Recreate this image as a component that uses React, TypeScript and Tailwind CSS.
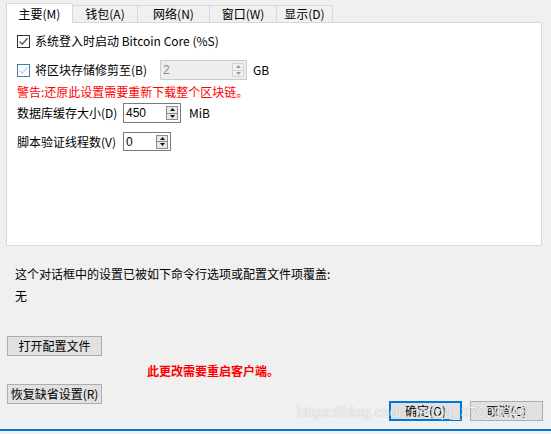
import React from 'react';

const font = { fontFamily: '"Noto Sans CJK SC", "Liberation Sans", sans-serif' };

function Check({ checked, hover }: { checked?: boolean; hover?: boolean }) {
  return (
    <span
      className={`flex h-[13px] w-[13px] shrink-0 items-center justify-center border bg-white ${
        hover ? 'border-[#3c7fb1]' : 'border-[#333333]'
      }`}
    >
      {checked || hover ? (
        <svg width="11" height="11" viewBox="0 0 11 11" aria-hidden>
          <path
            d="M1.5 5.5 L4.2 8.2 L9.5 2.2"
            fill="none"
            stroke={hover ? '#c8d4de' : '#555555'}
            strokeWidth="1.3"
          />
        </svg>
      ) : null}
    </span>
  );
}

function Spin({
  value,
  width,
  height,
  disabled,
}: {
  value: string;
  width: string;
  height: string;
  disabled?: boolean;
}) {
  const arrow = disabled ? '#9a9a9a' : '#111111';
  return (
    <div
      className={`flex items-center border pl-[2px] pr-[2px] ${width} ${height} ${
        disabled ? 'border-[#cccccc] bg-[#eeeeee] text-[#8a8a8a]' : 'border-[#7a7a7a] bg-white text-black'
      }`}
    >
      <span className="flex-1 text-[12px] leading-none" style={{ fontFamily: '"Liberation Sans", sans-serif' }}>
        {value}
      </span>
      <div
        className={`flex h-[14px] w-[12px] flex-col border ${
          disabled ? 'border-[#d4d4d4] bg-[#f2f2f2]' : 'border-[#8c8c8c] bg-[#e8e8e8]'
        }`}
      >
        <div className={`flex flex-1 items-center justify-center border-b ${disabled ? 'border-[#d4d4d4]' : 'border-[#8c8c8c]'}`}>
          <svg width="5" height="3" viewBox="0 0 5 3" aria-hidden>
            <path d="M0 3 L2.5 0 L5 3 Z" fill={arrow} />
          </svg>
        </div>
        <div className="flex flex-1 items-center justify-center">
          <svg width="5" height="3" viewBox="0 0 5 3" aria-hidden>
            <path d="M0 0 L2.5 3 L5 0 Z" fill={arrow} />
          </svg>
        </div>
      </div>
    </div>
  );
}

function Btn({ label, width, primary }: { label: string; width: string; primary?: boolean }) {
  return (
    <button
      className={`flex h-[20px] items-center justify-center bg-[#e1e1e1] text-[12px] leading-none text-black ${width} ${
        primary ? 'border-2 border-[#0078d7]' : 'border border-[#adadad]'
      }`}
    >
      {label}
    </button>
  );
}

export default function App() {
  const tabs = [
    { label: '钱包(A)', w: 'w-[65px]' },
    { label: '网络(N)', w: 'w-[72px]' },
    { label: '窗口(W)', w: 'w-[67px]' },
    { label: '显示(D)', w: 'w-[56px]' },
  ];

  return (
    <div className="relative flex h-[434px] w-[551px] flex-col overflow-hidden bg-[#f0f0f0] text-[12px] text-black" style={font}>
      <div className="flex items-end pl-[6px] pt-[3px]">
        <div className="relative z-10 -mb-px flex h-[20px] w-[67px] items-center justify-center border border-b-0 border-[#d9d9d9] bg-white">
          主要(M)
        </div>
        {tabs.map((t) => (
          <div
            key={t.label}
            className={`flex h-[17px] items-center justify-center border border-l-0 border-b-0 border-[#d9d9d9] bg-[#f0f0f0] ${t.w}`}
          >
            {t.label}
          </div>
        ))}
      </div>

      <div className="ml-[6px] flex h-[224px] w-[536px] flex-col border border-[#d9d9d9] bg-white pl-[10px]">
        <div className="mt-[11px] flex h-[14px] items-center gap-[5px]">
          <Check checked />
          <span>系统登入时启动 Bitcoin Core (%S)</span>
        </div>

        <div className="mt-[12px] flex h-[20px] items-center">
          <Check hover />
          <span className="ml-[5px] w-[125px]">将区块存储修剪至(B)</span>
          <Spin value="2" width="w-[87px]" height="h-[20px]" disabled />
          <span className="ml-[6px]">GB</span>
        </div>

        <div className="mt-[5px] flex h-[14px] items-center text-[#ff0000]">警告:还原此设置需要重新下载整个区块链。</div>

        <div className="mt-[4px] flex h-[20px] items-center">
          <span className="w-[106px]">数据库缓存大小(D)</span>
          <Spin value="450" width="w-[58px]" height="h-[20px]" />
          <span className="ml-[8px]">MiB</span>
        </div>

        <div className="mt-[9px] flex h-[19px] items-center">
          <span className="w-[106px]">脚本验证线程数(V)</span>
          <Spin value="0" width="w-[48px]" height="h-[19px]" />
        </div>
      </div>

      <div className="mt-[21px] flex h-[14px] items-center pl-[15px]">这个对话框中的设置已被如下命令行选项或配置文件项覆盖:</div>
      <div className="mt-[8px] flex h-[14px] items-center pl-[15px]">无</div>

      <div className="mt-[33px] pl-[7px]">
        <Btn label="打开配置文件" width="w-[95px]" />
      </div>
      <div className="mt-[8px] flex h-[14px] items-center pl-[147px] font-bold text-[#ff0000]">此更改需要重启客户端。</div>

      <div className="mt-[6px] flex h-[37px] justify-between pl-[7px] pr-[8px]">
        <div className="self-start">
          <Btn label="恢复缺省设置(R)" width="w-[95px]" />
        </div>
        <div className="flex gap-[8px] self-end">
          <Btn label="确定(O)" width="w-[73px]" primary />
          <Btn label="取消(C)" width="w-[73px]" />
        </div>
      </div>

      <div className="mt-auto mb-[3px] h-[2px] w-full bg-[#0078d7]" />

      <div
        className="pointer-events-none absolute left-[297px] top-[401px] text-[15px] text-white/85"
        style={{ fontFamily: '"Liberation Sans", sans-serif', textShadow: '0 0 1px rgba(0,0,0,0.35)' }}
      >
        https://blog.csdn.net/qq_37000046
      </div>
    </div>
  );
}
